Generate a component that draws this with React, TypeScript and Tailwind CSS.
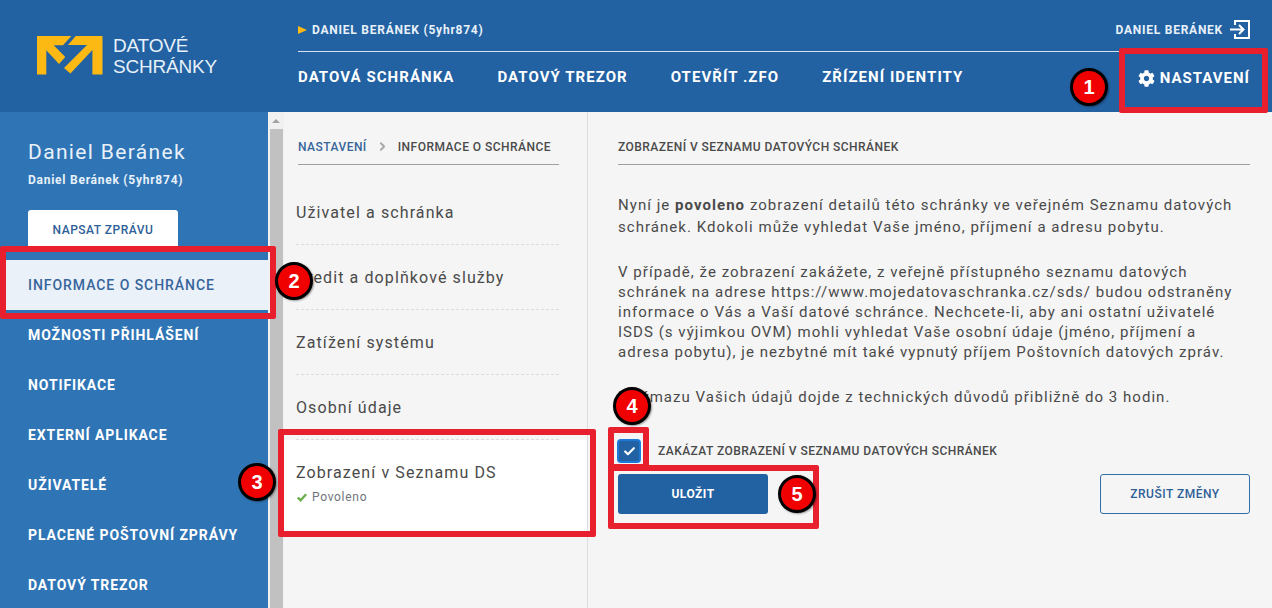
import { Check, ChevronRight } from "lucide-react";
import { FaCog } from "react-icons/fa";

const sideItems = [
  "MOŽNOSTI PŘIHLÁŠENÍ",
  "NOTIFIKACE",
  "EXTERNÍ APLIKACE",
  "UŽIVATELÉ",
  "PLACENÉ POŠTOVNÍ ZPRÁVY",
  "DATOVÝ TREZOR",
];

const navItems = ["DATOVÁ SCHRÁNKA", "DATOVÝ TREZOR", "OTEVŘÍT .ZFO", "ZŘÍZENÍ IDENTITY"];

const middleItems = ["Uživatel a schránka", "Kredit a doplňkové služby", "Zatížení systému", "Osobní údaje"];

const Logo = () => (
  <div className="flex items-center w-[298px] pl-[37px] pb-[1px] shrink-0">
    <svg width="66" height="39" viewBox="0 0 66 39" fill="#fdb913">
      <path d="M0 0H34.4L26 9.3H16.7L28.3 21L22 28L9.3 14.3V38.5H0Z" />
      <path d="M38.7 0H65.5V38.5H55.4V14L33.4 37.6L27 32L50 9H31Z" />
    </svg>
    <div className="ml-[10px] text-[19px] leading-[21px] text-[#e8f1f9] tracking-[-0.2px] font-['Liberation_Sans',sans-serif]">
      <div>DATOVÉ</div>
      <div>SCHRÁNKY</div>
    </div>
  </div>
);

const Marker = ({ n, className }: { n: number; className: string }) => (
  <div
    className={`absolute w-[38px] h-[38px] rounded-full bg-[#f00000] border-[3px] border-black flex items-center justify-center text-white text-[20px] font-bold shadow-[1px_1px_2px_rgba(0,0,0,0.4)] font-['Liberation_Sans',sans-serif] ${className}`}
  >
    {n}
  </div>
);

const RedBox = ({ className }: { className: string }) => (
  <div className={`absolute border-[6px] border-[#e8202e] rounded-[2px] ${className}`} />
);

export default function App() {
  return (
    <div className="relative w-[1272px] h-[608px] overflow-hidden bg-[#f5f5f5] font-['Roboto',sans-serif]">
      <header className="h-[112px] bg-[#2261a2] flex">
        <Logo />
        <div className="flex-1 pr-[22px]">
          <div className="h-[52px] border-b border-[#d5e2ef] flex items-center justify-between pt-[8px]">
            <div className="flex items-center text-[12px] font-bold tracking-[0.77px] text-[#e8f1f9]">
              <span className="w-0 h-0 border-y-[4px] border-y-transparent border-l-[9px] border-l-[#fdb913] mr-[5px]" />
              DANIEL BERÁNEK (5yhr874)
            </div>
            <div className="flex items-center text-[12px] font-bold tracking-[0.75px] text-[#e8f1f9]">
              DANIEL BERÁNEK
              <svg className="ml-[7px]" width="20" height="19" viewBox="0 0 20 19" fill="none" stroke="#fff" strokeWidth="2">
                <path d="M5 5V1H19V18H5V14" />
                <path d="M0 9.5H13M9 5L13.5 9.5L9 14" />
              </svg>
            </div>
          </div>
          <div className="h-[60px] flex items-center justify-between pb-[9px]">
            <nav className="flex gap-[43px]">
              {navItems.map((item) => (
                <span key={item} className="text-[15px] font-bold tracking-[1.05px] text-white">
                  {item}
                </span>
              ))}
            </nav>
            <div className="flex items-center text-[15px] font-bold tracking-[1px] text-white mt-[2px]">
              <FaCog className="mr-[5px] w-[17px] h-[17px]" />
              NASTAVENÍ
            </div>
          </div>
        </div>
      </header>

      <div className="flex h-[496px]">
        <aside className="w-[268px] shrink-0 bg-[#2f75b5] text-white">
          <div className="pl-[28px] pt-[28px]">
            <div className="text-[21px] leading-[24px] tracking-[1.35px] text-[#e8f1f9]">Daniel Beránek</div>
            <div className="mt-[8px] text-[12px] leading-[16px] font-bold tracking-[0.75px] text-[#e8f1f9]">Daniel Beránek (5yhr874)</div>
            <div className="mt-[22px] w-[150px] h-[40px] bg-white rounded-t-[3px] flex items-center justify-center text-[12px] font-medium tracking-[0.5px] text-[#2f5f97]">
              NAPSAT ZPRÁVU
            </div>
          </div>
          <div className="mt-[10px] h-[50px] bg-[#eaf1f8] flex items-center pl-[28px] text-[14px] font-medium tracking-[0.95px] text-[#37659b]">
            INFORMACE O SCHRÁNCE
          </div>
          {sideItems.map((item) => (
            <div key={item} className="h-[50px] flex items-center pl-[28px] text-[14px] font-bold tracking-[0.9px] text-white">
              {item}
            </div>
          ))}
        </aside>

        <div className="w-[16px] shrink-0 bg-[#f1f1f1] flex flex-col">
          <div className="h-[17px] flex items-center justify-center">
            <span className="w-0 h-0 border-x-[4px] border-x-transparent border-b-[4px] border-b-[#a3a3a3]" />
          </div>
          <div className="w-[13px] ml-[2px] flex-1 bg-[#c1c1c1]" />
        </div>

        <section className="w-[304px] shrink-0 border-r border-[#dddddd] pt-[22px]">
          <div className="ml-[14px] w-[261px] h-[31px] border-b border-[#a0a0a0] flex items-start pt-[4px] text-[12px] font-medium tracking-[0.47px]">
            <span className="text-[#37659b]">NASTAVENÍ</span>
            <ChevronRight size={13} strokeWidth={3.5} className="text-[#a8a8a8] mx-[9px] mt-[2px]" />
            <span className="text-[#4a4a4a]">INFORMACE O SCHRÁNCE</span>
          </div>
          <div className="ml-[12px] mr-[28px] mt-[15px]">
            {middleItems.map((item) => (
              <div key={item} className="h-[65px] flex items-center pt-[1px] border-b border-dashed border-[#dcdcdc] text-[16px] tracking-[1.1px] text-[#4a4a4a]">
                {item}
              </div>
            ))}
          </div>
          <div className="w-[303px] h-[92px] bg-white pl-[12px] pt-[23px]">
            <div className="text-[16px] leading-[20px] tracking-[1.1px] text-[#4a4a4a]">Zobrazení v Seznamu DS</div>
            <div className="flex items-center mt-[5px] text-[12px] tracking-[0.7px] text-[#70757a]">
              <svg className="mr-[5px] ml-[1px]" width="10" height="9" viewBox="0 0 10 9" fill="none" stroke="#6ab04a" strokeWidth="2.4">
                <path d="M0.8 4.5L3.6 7.2L9.2 1.2" />
              </svg>
              Povoleno
            </div>
          </div>
        </section>

        <main className="flex-1 pr-[22px] pl-[30px] pt-[24px]">
          <div className="h-[29px] border-b border-[#a0a0a0] pt-[1px] text-[12px] font-medium tracking-[0.46px] text-[#4a4a4a] leading-[20px]">
            ZOBRAZENÍ V SEZNAMU DATOVÝCH SCHRÁNEK
          </div>
          <div className="mt-[29px] text-[15px] leading-[20px] tracking-[1.04px] text-[#4a4a4a]">
            <p className="leading-[22px]">
              Nyní je <b>povoleno</b> zobrazení detailů této schránky ve veřejném Seznamu datových schránek. Kdokoli může vyhledat Vaše jméno, příjmení a adresu pobytu.
            </p>
            <p className="mt-[24px]">
              V případě, že zobrazení zakážete, z veřejně přístupného seznamu datových schránek na adrese https://www.mojedatovaschranka.cz/sds/ budou odstraněny informace o Vás a Vaší datové schránce. Nechcete-li, aby ani ostatní uživatelé ISDS (s výjimkou OVM) mohli vyhledat Vaše osobní údaje (jméno, příjmení a adresa pobytu), je nezbytné mít také vypnutý příjem Poštovních datových zpráv.
            </p>
            <p className="mt-[25px]">K výmazu Vašich údajů dojde z technických důvodů přibližně do 3 hodin.</p>
          </div>
          <div className="flex items-center mt-[32px] -ml-[1px]">
            <div className="w-[24px] h-[24px] rounded-[4px] bg-[#2261a2] border-[2px] border-[#1e78d8] flex items-center justify-center">
              <Check size={13} strokeWidth={4} className="text-white" />
            </div>
            <span className="ml-[17px] text-[12px] font-medium tracking-[0.45px] text-[#4a4a4a]">ZAKÁZAT ZOBRAZENÍ V SEZNAMU DATOVÝCH SCHRÁNEK</span>
          </div>
          <div className="flex justify-between mt-[11px]">
            <button className="w-[150px] h-[40px] rounded-[3px] bg-[#2261a2] text-white text-[12px] font-bold tracking-[0.5px]">ULOŽIT</button>
            <button className="w-[150px] h-[40px] rounded-[3px] border border-[#2f6fa8] text-[#2f5f97] text-[12px] font-medium tracking-[0.5px]">ZRUŠIT ZMĚNY</button>
          </div>
        </main>
      </div>

      <RedBox className="left-[1119px] top-[48px] w-[149px] h-[65px]" />
      <RedBox className="left-0 top-[246px] w-[276px] h-[73px]" />
      <RedBox className="left-[278px] top-[429px] w-[318px] h-[108px]" />
      <RedBox className="left-[608px] top-[427px] w-[41px] h-[43px]" />
      <RedBox className="left-[608px] top-[465px] w-[211px] h-[64px]" />

      <Marker n={1} className="left-[1070px] top-[68px]" />
      <Marker n={2} className="left-[275px] top-[262px]" />
      <Marker n={3} className="left-[238px] top-[463px]" />
      <Marker n={4} className="left-[613px] top-[387px]" />
      <Marker n={5} className="left-[778px] top-[475px]" />
    </div>
  );
}
